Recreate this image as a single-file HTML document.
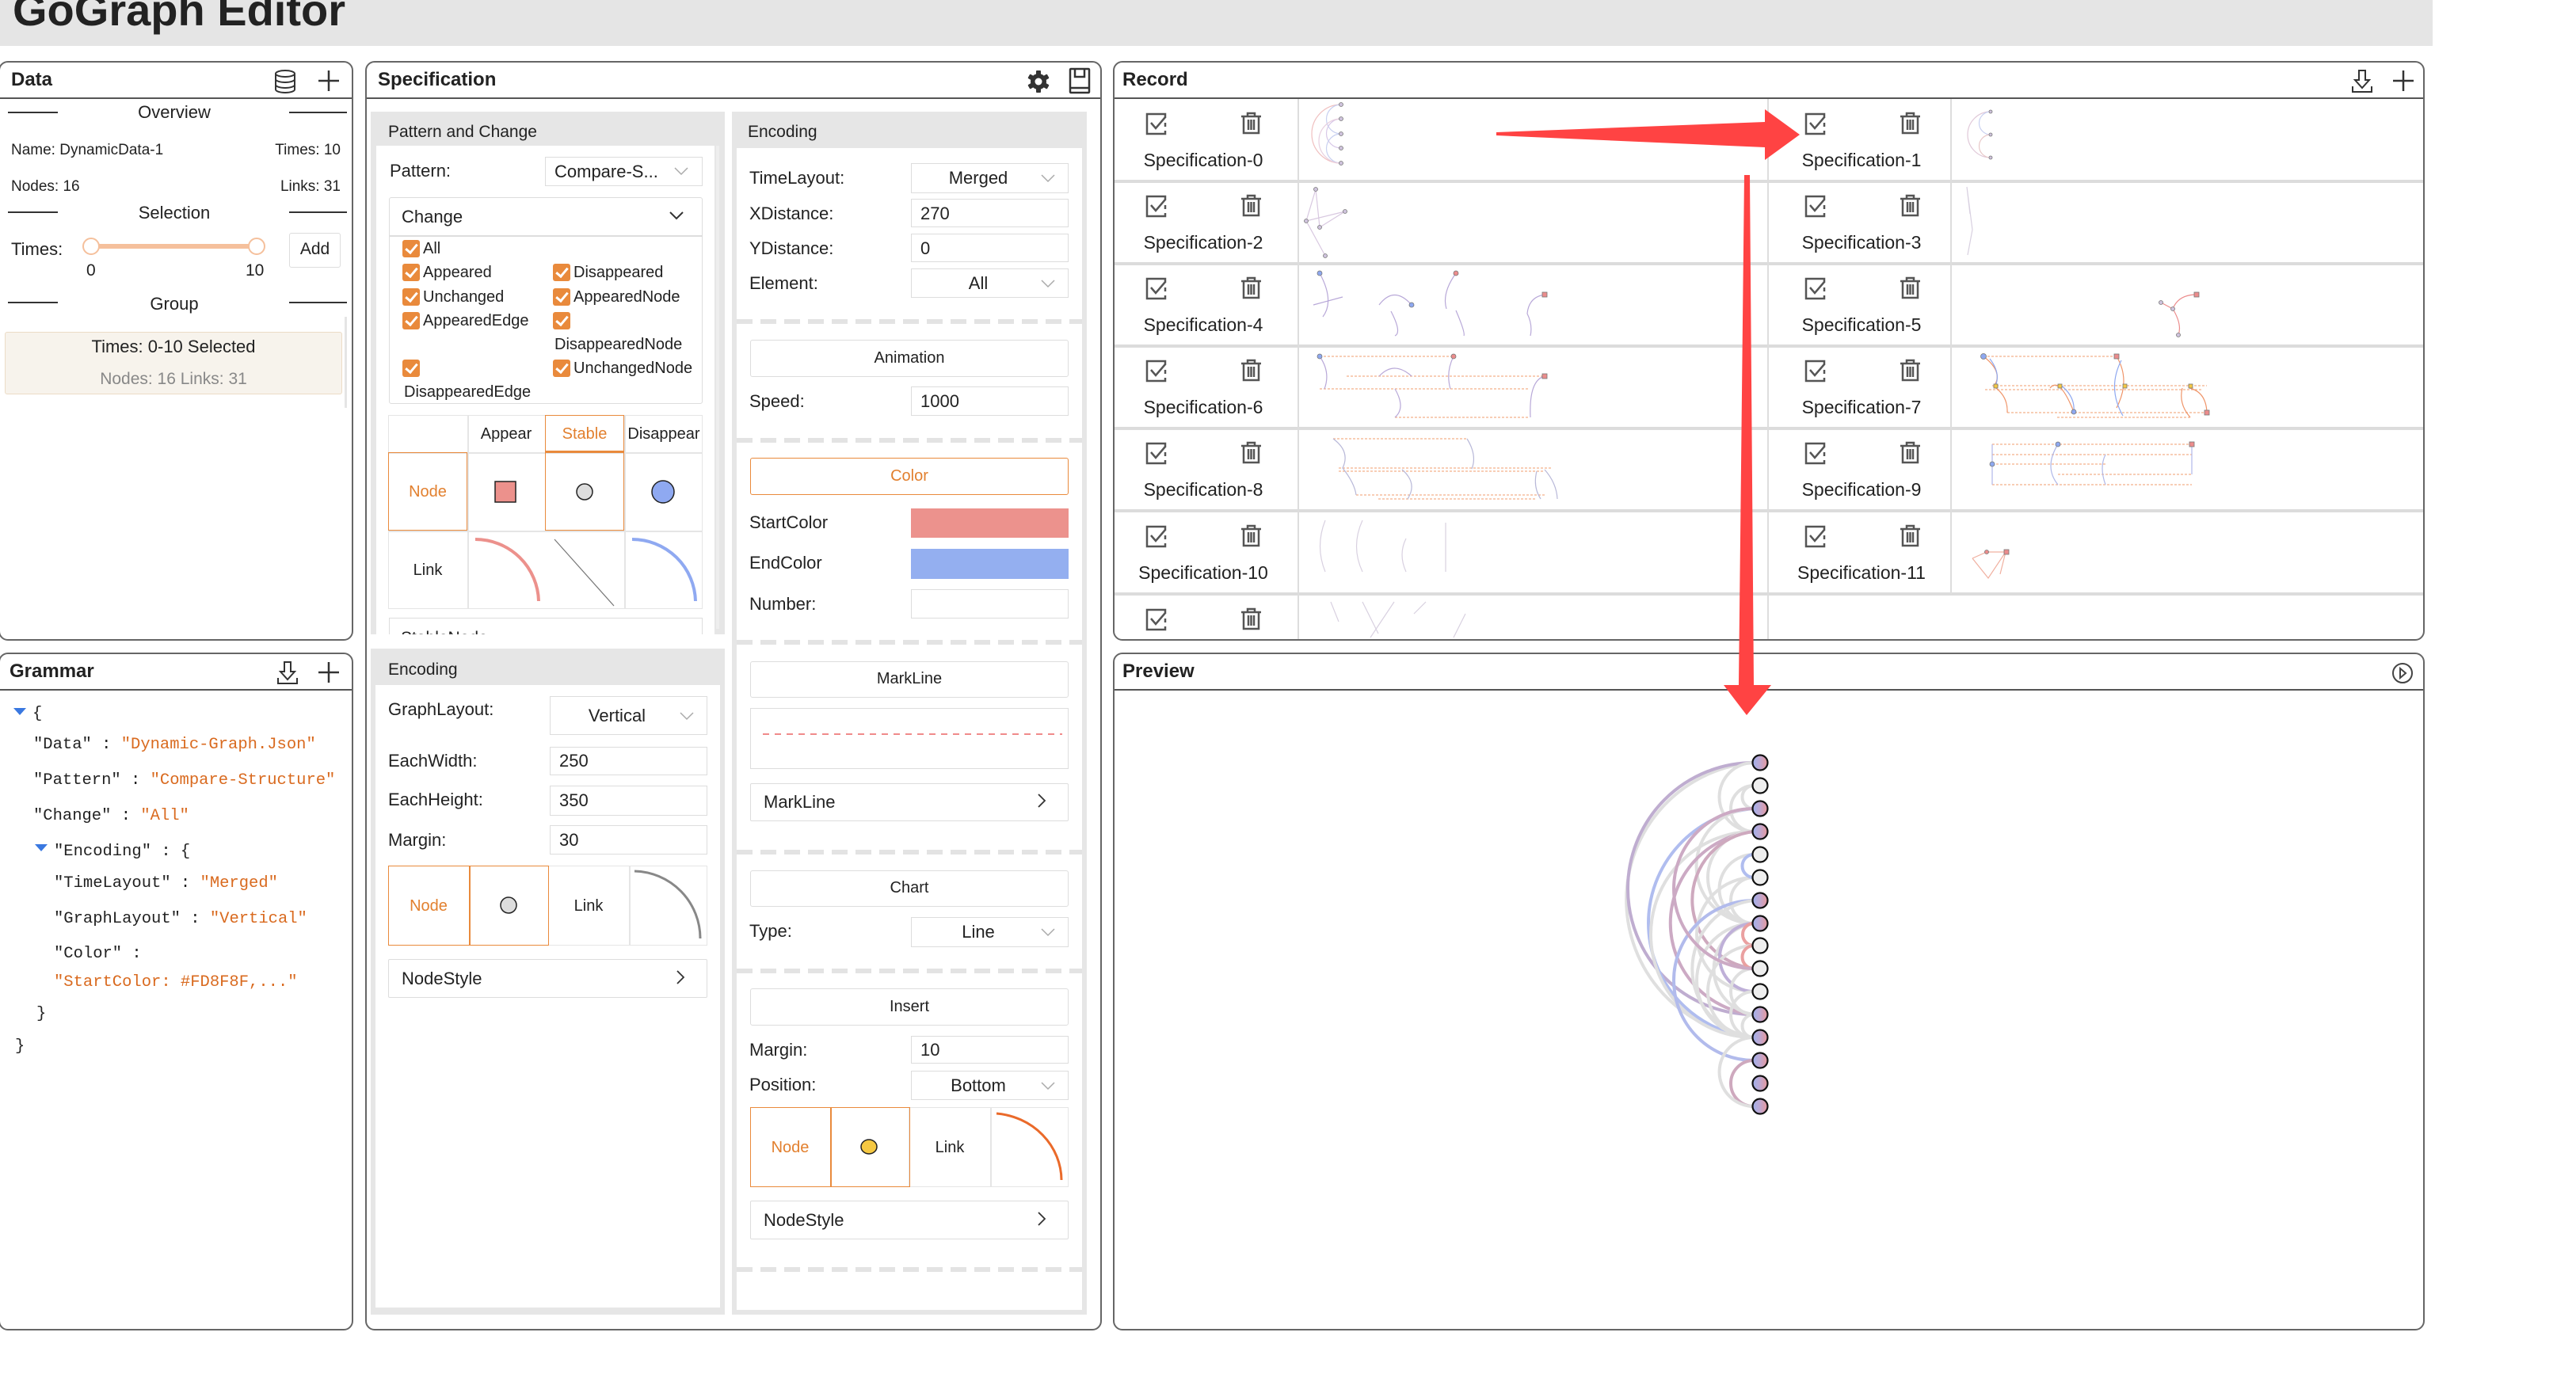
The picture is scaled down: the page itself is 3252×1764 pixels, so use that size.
<!DOCTYPE html>
<html><head><meta charset="utf-8"><style>
*{box-sizing:border-box}
body{margin:0;width:3252px;height:1764px;overflow:hidden;background:#fff;font-family:"Liberation Sans",Arial,sans-serif;color:#222;font-size:21px;position:relative}
.a{position:absolute}
.t{position:absolute;height:30px;line-height:30px;white-space:nowrap}
.c{text-align:center}
.panel{position:absolute;border:2px solid #666;border-radius:12px;background:#fff}
.ph{position:absolute;left:0;right:0;top:0;height:46px;border-bottom:2px solid #555}
.pt{position:absolute;left:14px;top:8px;font-weight:bold;font-size:24px}
.box{position:absolute;border:1.5px solid #ddd;background:#fff}
.gray{position:absolute;background:#e6e6e6}
.dash{position:absolute;height:6px;background:repeating-linear-gradient(90deg,#e3e3e3 0 20px,transparent 20px 30px)}
.cb{position:absolute;width:22px;height:22px;background:#e98a3c;border-radius:3px}
.cb:after{content:"";position:absolute;left:7px;top:2px;width:6px;height:12px;border:solid #fff;border-width:0 3px 3px 0;transform:rotate(40deg)}
.or{color:#e2802f}
.mono{font-family:"Liberation Mono",monospace;font-size:20.5px}
.s{color:#d96a1f}
.sep{position:absolute;left:0;right:0;height:4px;background:#dcdcdc}
.lab{position:absolute;font-size:23px;width:200px;text-align:center;height:30px;line-height:30px}
</style></head><body>

<div class="a" style="left:0;top:0;width:3071px;height:58px;background:#e5e5e5"></div>
<div class="a" style="left:16px;top:-20px;font-size:56px;font-weight:bold;color:#222;line-height:66px">GoGraph Editor</div>

<!-- DATA panel -->
<div class="panel" style="left:-2px;top:77px;width:448px;height:732px">
 <div class="ph"><div class="pt">Data</div>
  <svg class="a" style="left:345px;top:8px" width="30" height="32" viewBox="0 0 30 32" fill="none" stroke="#333" stroke-width="2"><ellipse cx="15" cy="6" rx="12" ry="4"/><path d="M3 6v20c0 2.2 5.4 4 12 4s12-1.8 12-4V6M3 13c0 2.2 5.4 4 12 4s12-1.8 12-4M3 20c0 2.2 5.4 4 12 4s12-1.8 12-4"/></svg>
  <svg class="a" style="left:400px;top:8px" width="30" height="30" stroke="#333" stroke-width="2.5"><path d="M15 2v26M2 15h26"/></svg>
 </div>
</div>
<div class="a" style="left:10px;top:141px;width:63px;height:2px;background:#333"></div>
<div class="a" style="left:365px;top:141px;width:73px;height:2px;background:#333"></div>
<div class="t c" style="left:120px;width:200px;top:127px;font-size:22px">Overview</div>
<div class="t" style="left:14px;top:175px;font-size:19px">Name: DynamicData-1</div>
<div class="t" style="left:330px;width:100px;text-align:right;top:175px;font-size:19px">Times: 10</div>
<div class="t" style="left:14px;top:221px;font-size:19px">Nodes: 16</div>
<div class="t" style="left:330px;width:100px;text-align:right;top:221px;font-size:19px">Links: 31</div>
<div class="a" style="left:10px;top:267px;width:63px;height:2px;background:#333"></div>
<div class="a" style="left:365px;top:267px;width:73px;height:2px;background:#333"></div>
<div class="t c" style="left:120px;width:200px;top:254px;font-size:22px">Selection</div>
<div class="t" style="left:14px;top:300px;font-size:22px">Times:</div>
<div class="a" style="left:116px;top:308px;width:208px;height:6px;background:#f5c09c;border-radius:3px"></div>
<div class="a" style="left:104px;top:300px;width:22px;height:22px;border:2.5px solid #f5c09c;border-radius:50%;background:#fff"></div>
<div class="a" style="left:313px;top:300px;width:22px;height:22px;border:2.5px solid #f5c09c;border-radius:50%;background:#fff"></div>
<div class="t" style="left:109px;top:327px;font-size:21px">0</div>
<div class="t" style="left:310px;top:327px;font-size:21px">10</div>
<div class="box" style="left:365px;top:294px;width:65px;height:44px;line-height:40px;text-align:center;font-size:21px;border-radius:3px">Add</div>
<div class="a" style="left:10px;top:381px;width:63px;height:2px;background:#333"></div>
<div class="a" style="left:365px;top:381px;width:73px;height:2px;background:#333"></div>
<div class="t c" style="left:120px;width:200px;top:369px;font-size:22px">Group</div>
<div class="a" style="left:435px;top:400px;width:3px;height:115px;background:#e5e5e5"></div>
<div class="a" style="left:6px;top:419px;width:426px;height:79px;background:#f7f3ec;border:1.5px solid #ecdcc6;border-radius:3px"></div>
<div class="t c" style="left:6px;width:426px;top:423px;font-size:22px">Times: 0-10 Selected</div>
<div class="t c" style="left:6px;width:426px;top:464px;font-size:21px;color:#888">Nodes: 16 Links: 31</div>

<!-- GRAMMAR panel -->
<div class="panel" style="left:-2px;top:824px;width:448px;height:856px">
 <div class="ph"><div class="pt" style="left:12px">Grammar</div>
  <svg class="a" style="left:348px;top:8px" width="30" height="32" fill="none" stroke="#333" stroke-width="2"><path d="M11 2h8v12h5l-9 10-9-10h5z"/><path d="M3 22v7h24v-7"/></svg>
  <svg class="a" style="left:400px;top:8px" width="30" height="30" stroke="#333" stroke-width="2.5"><path d="M15 2v26M2 15h26"/></svg>
 </div>
</div>
<svg class="a" style="left:17px;top:894px" width="16" height="10"><path d="M0 0h16L8 9z" fill="#3a78e0"/></svg>
<div class="t mono" style="left:41px;top:887px">{</div>
<div class="t mono" style="left:42px;top:926px">"Data" : <span class="s">"Dynamic-Graph.Json"</span></div>
<div class="t mono" style="left:42px;top:971px">"Pattern" : <span class="s">"Compare-Structure"</span></div>
<div class="t mono" style="left:42px;top:1016px">"Change" : <span class="s">"All"</span></div>
<svg class="a" style="left:44px;top:1066px" width="16" height="10"><path d="M0 0h16L8 9z" fill="#3a78e0"/></svg>
<div class="t mono" style="left:68px;top:1061px">"Encoding" : {</div>
<div class="t mono" style="left:68px;top:1101px">"TimeLayout" : <span class="s">"Merged"</span></div>
<div class="t mono" style="left:68px;top:1146px">"GraphLayout" : <span class="s">"Vertical"</span></div>
<div class="t mono" style="left:68px;top:1190px">"Color" :</div>
<div class="t mono" style="left:68px;top:1226px"><span class="s">"StartColor: #FD8F8F,..."</span></div>
<div class="t mono" style="left:46px;top:1266px">}</div>
<div class="t mono" style="left:19px;top:1307px">}</div>

<!-- SPECIFICATION panel -->
<div class="panel" style="left:461px;top:77px;width:930px;height:1603px">
 <div class="ph"><div class="pt">Specification</div>
  <svg class="a" style="left:833px;top:9px" width="30" height="30" viewBox="0 0 30 30"><g fill="#333"><circle cx="15" cy="15" r="10"/><rect x="12" y="1" width="6" height="28" rx="1"/><rect x="12" y="1" width="6" height="28" rx="1" transform="rotate(60 15 15)"/><rect x="12" y="1" width="6" height="28" rx="1" transform="rotate(120 15 15)"/></g><circle cx="15" cy="15" r="4.5" fill="#fff"/></svg>
  <svg class="a" style="left:886px;top:6px" width="28" height="34" fill="none" stroke="#333" stroke-width="2.5"><rect x="2" y="2" width="24" height="30" rx="1"/><path d="M8 2v10h12V2M2 26h24"/></svg>
 </div>
</div>
<div class="gray" style="left:468px;top:141px;width:447px;height:660px"></div>
<div class="t" style="left:490px;top:152px;font-size:21px">Pattern and Change</div>
<div class="a" style="left:475px;top:184px;width:427px;height:617px;background:#fff"></div>
<div class="a" style="left:904px;top:184px;width:4px;height:610px;background:#eee"></div>
<div class="t" style="left:492px;top:201px;font-size:22px">Pattern:</div>
<div class="box" style="left:688px;top:198px;width:199px;height:37px"></div>
<div class="t" style="left:700px;top:202px;font-size:22px">Compare-S...</div>
<svg class="a" style="left:851px;top:210px" width="18" height="12" fill="none" stroke="#aaa" stroke-width="1.5"><path d="M1 2l8 8 8-8"/></svg>
<div class="box" style="left:491px;top:249px;width:396px;height:261px;border-radius:3px"></div>
<div class="a" style="left:491px;top:297px;width:396px;height:1.5px;background:#ddd"></div>
<div class="t" style="left:507px;top:259px;font-size:22px">Change</div>
<svg class="a" style="left:845px;top:266px" width="18" height="12" fill="none" stroke="#333" stroke-width="2"><path d="M1 2l8 8 8-8"/></svg>
<div class="cb" style="left:508px;top:303px"></div><div class="t" style="left:534px;top:299px;font-size:20px">All</div>
<div class="cb" style="left:508px;top:333px"></div><div class="t" style="left:534px;top:329px;font-size:20px">Appeared</div>
<div class="cb" style="left:698px;top:333px"></div><div class="t" style="left:724px;top:329px;font-size:20px">Disappeared</div>
<div class="cb" style="left:508px;top:364px"></div><div class="t" style="left:534px;top:360px;font-size:20px">Unchanged</div>
<div class="cb" style="left:698px;top:364px"></div><div class="t" style="left:724px;top:360px;font-size:20px">AppearedNode</div>
<div class="cb" style="left:508px;top:394px"></div><div class="t" style="left:534px;top:390px;font-size:20px">AppearedEdge</div>
<div class="cb" style="left:698px;top:394px"></div>
<div class="t" style="left:700px;top:420px;font-size:20px">DisappearedNode</div>
<div class="cb" style="left:508px;top:454px"></div>
<div class="cb" style="left:698px;top:454px"></div><div class="t" style="left:724px;top:450px;font-size:20px">UnchangedNode</div>
<div class="t" style="left:510px;top:480px;font-size:20px">DisappearedEdge</div>
<div class="a" style="left:490px;top:524px;width:397px;height:245px;border:1.5px solid #e5e5e5"></div>
<div class="a" style="left:590px;top:524px;width:1.5px;height:245px;background:#e5e5e5"></div>
<div class="a" style="left:788px;top:524px;width:1.5px;height:245px;background:#e5e5e5"></div>
<div class="a" style="left:490px;top:571px;width:397px;height:1.5px;background:#e5e5e5"></div>
<div class="a" style="left:490px;top:670px;width:397px;height:1.5px;background:#e5e5e5"></div>
<div class="a" style="left:688px;top:524px;width:100px;height:47px;border:1.5px solid #e98a3c;border-bottom:2px solid #e98a3c"></div>
<div class="a" style="left:688px;top:571px;width:100px;height:99px;border:1.5px solid #e98a3c"></div>
<div class="a" style="left:490px;top:571px;width:100px;height:99px;border:1.5px solid #e98a3c"></div>
<div class="t c" style="left:590px;width:98px;top:533px;font-size:20px">Appear</div>
<div class="t c or" style="left:688px;width:100px;top:533px;font-size:20px">Stable</div>
<div class="t c" style="left:788px;width:100px;top:533px;font-size:20px">Disappear</div>
<div class="t c or" style="left:490px;width:100px;top:606px;font-size:20px">Node</div>
<div class="t c" style="left:490px;width:100px;top:705px;font-size:20px">Link</div>
<svg class="a" style="left:590px;top:571px" width="298" height="198">
 <rect x="35" y="37" width="26" height="26" fill="#ec918c" stroke="#222" stroke-width="1.5"/>
 <circle cx="148" cy="50" r="10" fill="#ddd" stroke="#222" stroke-width="1.5"/>
 <circle cx="247" cy="50" r="14" fill="#8fa9f1" stroke="#222" stroke-width="1.5"/>
 <path d="M10 110 A80 80 0 0 1 90 188" fill="none" stroke="#ec918c" stroke-width="4"/>
 <path d="M110 110 L185 194" stroke="#777" stroke-width="1.2"/>
 <path d="M208 110 A80 80 0 0 1 288 188" fill="none" stroke="#8fa9f1" stroke-width="4"/>
</svg>
<div class="box" style="left:491px;top:780px;width:396px;height:21px;border-bottom:none;overflow:hidden"><div class="t" style="left:14px;top:10px;font-size:21px">StableNode</div></div>
<div class="a" style="left:468px;top:801px;width:447px;height:18px;background:#fff"></div>

<div class="gray" style="left:468px;top:819px;width:447px;height:841px"></div>
<div class="t" style="left:490px;top:831px;font-size:21px">Encoding</div>
<div class="a" style="left:474px;top:865px;width:435px;height:786px;background:#fff"></div>
<div class="t" style="left:490px;top:881px;font-size:22px">GraphLayout:</div>
<div class="box" style="left:694px;top:879px;width:199px;height:49px"></div>
<div class="t c" style="left:694px;width:170px;top:889px;font-size:22px">Vertical</div>
<svg class="a" style="left:858px;top:898px" width="18" height="12" fill="none" stroke="#aaa" stroke-width="1.5"><path d="M1 2l8 8 8-8"/></svg>
<div class="t" style="left:490px;top:946px;font-size:22px">EachWidth:</div>
<div class="box" style="left:694px;top:943px;width:199px;height:36px"></div><div class="t" style="left:706px;top:946px;font-size:22px">250</div>
<div class="t" style="left:490px;top:995px;font-size:22px">EachHeight:</div>
<div class="box" style="left:694px;top:992px;width:199px;height:38px"></div><div class="t" style="left:706px;top:996px;font-size:22px">350</div>
<div class="t" style="left:490px;top:1046px;font-size:22px">Margin:</div>
<div class="box" style="left:694px;top:1042px;width:199px;height:37px"></div><div class="t" style="left:706px;top:1046px;font-size:22px">30</div>
<div class="a" style="left:692px;top:1093px;width:201px;height:101px;border:1.5px solid #e5e5e5"></div>
<div class="a" style="left:794px;top:1093px;width:1.5px;height:101px;background:#e5e5e5"></div>
<div class="a" style="left:490px;top:1093px;width:203px;height:101px;border:1.5px solid #e98a3c"></div>
<div class="a" style="left:592px;top:1093px;width:1.5px;height:101px;background:#e98a3c"></div>
<div class="t c or" style="left:490px;width:102px;top:1129px;font-size:20px">Node</div>
<div class="t c" style="left:692px;width:102px;top:1129px;font-size:20px">Link</div>
<svg class="a" style="left:592px;top:1093px" width="301" height="101"><circle cx="50" cy="50" r="10" fill="#ddd" stroke="#222" stroke-width="1.5"/><path d="M209 7 A85 85 0 0 1 292 92" fill="none" stroke="#888" stroke-width="3"/></svg>
<div class="box" style="left:490px;top:1211px;width:403px;height:49px;border-radius:2px"></div>
<div class="t" style="left:507px;top:1221px;font-size:22px">NodeStyle</div>
<svg class="a" style="left:853px;top:1225px" width="12" height="18" fill="none" stroke="#333" stroke-width="1.8"><path d="M2 1l8 8-8 8"/></svg>

<div class="gray" style="left:924px;top:141px;width:448px;height:1519px"></div>
<div class="t" style="left:944px;top:152px;font-size:21px">Encoding</div>
<div class="a" style="left:930px;top:187px;width:436px;height:1467px;background:#fff"></div>
<div class="t" style="left:946px;top:210px;font-size:22px">TimeLayout:</div>
<div class="box" style="left:1150px;top:206px;width:199px;height:38px"></div>
<div class="t c" style="left:1150px;width:170px;top:210px;font-size:22px">Merged</div>
<svg class="a" style="left:1314px;top:219px" width="18" height="12" fill="none" stroke="#aaa" stroke-width="1.5"><path d="M1 2l8 8 8-8"/></svg>
<div class="t" style="left:946px;top:255px;font-size:22px">XDistance:</div>
<div class="box" style="left:1150px;top:251px;width:199px;height:36px"></div><div class="t" style="left:1162px;top:255px;font-size:22px">270</div>
<div class="t" style="left:946px;top:299px;font-size:22px">YDistance:</div>
<div class="box" style="left:1150px;top:295px;width:199px;height:36px"></div><div class="t" style="left:1162px;top:299px;font-size:22px">0</div>
<div class="t" style="left:946px;top:343px;font-size:22px">Element:</div>
<div class="box" style="left:1150px;top:339px;width:199px;height:37px"></div>
<div class="t c" style="left:1150px;width:170px;top:343px;font-size:22px">All</div>
<svg class="a" style="left:1314px;top:352px" width="18" height="12" fill="none" stroke="#aaa" stroke-width="1.5"><path d="M1 2l8 8 8-8"/></svg>
<div class="dash" style="left:930px;top:403px;width:436px"></div>
<div class="box" style="left:947px;top:429px;width:402px;height:47px;border-radius:3px;text-align:center;line-height:44px;font-size:20px">Animation</div>
<div class="t" style="left:946px;top:492px;font-size:22px">Speed:</div>
<div class="box" style="left:1150px;top:488px;width:199px;height:37px"></div><div class="t" style="left:1162px;top:492px;font-size:22px">1000</div>
<div class="dash" style="left:930px;top:553px;width:436px"></div>
<div class="box" style="left:947px;top:578px;width:402px;height:47px;border:1.5px solid #e98a3c;border-radius:3px;text-align:center;line-height:44px;font-size:20px;color:#e2802f">Color</div>
<div class="t" style="left:946px;top:645px;font-size:22px">StartColor</div>
<div class="a" style="left:1150px;top:642px;width:199px;height:37px;background:#ec928d"></div>
<div class="t" style="left:946px;top:696px;font-size:22px">EndColor</div>
<div class="a" style="left:1150px;top:693px;width:199px;height:38px;background:#94aff0"></div>
<div class="t" style="left:946px;top:748px;font-size:22px">Number:</div>
<div class="box" style="left:1150px;top:744px;width:199px;height:37px"></div>
<div class="dash" style="left:930px;top:808px;width:436px"></div>
<div class="box" style="left:947px;top:835px;width:402px;height:46px;border-radius:3px;text-align:center;line-height:43px;font-size:20px">MarkLine</div>
<div class="box" style="left:947px;top:894px;width:402px;height:77px"></div>
<div class="a" style="left:963px;top:926px;width:378px;height:2px;background:repeating-linear-gradient(90deg,#f08a8a 0 8px,transparent 8px 15px)"></div>
<div class="box" style="left:947px;top:989px;width:402px;height:48px;border-radius:2px"></div>
<div class="t" style="left:964px;top:998px;font-size:22px">MarkLine</div>
<svg class="a" style="left:1309px;top:1002px" width="12" height="18" fill="none" stroke="#333" stroke-width="1.8"><path d="M2 1l8 8-8 8"/></svg>
<div class="dash" style="left:930px;top:1073px;width:436px"></div>
<div class="box" style="left:947px;top:1099px;width:402px;height:46px;border-radius:3px;text-align:center;line-height:43px;font-size:20px">Chart</div>
<div class="t" style="left:946px;top:1161px;font-size:22px">Type:</div>
<div class="box" style="left:1150px;top:1158px;width:199px;height:38px"></div>
<div class="t c" style="left:1150px;width:170px;top:1162px;font-size:22px">Line</div>
<svg class="a" style="left:1314px;top:1171px" width="18" height="12" fill="none" stroke="#aaa" stroke-width="1.5"><path d="M1 2l8 8 8-8"/></svg>
<div class="dash" style="left:930px;top:1223px;width:436px"></div>
<div class="box" style="left:947px;top:1248px;width:402px;height:47px;border-radius:3px;text-align:center;line-height:44px;font-size:20px">Insert</div>
<div class="t" style="left:946px;top:1311px;font-size:22px">Margin:</div>
<div class="box" style="left:1150px;top:1308px;width:199px;height:35px"></div><div class="t" style="left:1162px;top:1311px;font-size:22px">10</div>
<div class="t" style="left:946px;top:1355px;font-size:22px">Position:</div>
<div class="box" style="left:1150px;top:1352px;width:199px;height:37px"></div>
<div class="t c" style="left:1150px;width:170px;top:1356px;font-size:22px">Bottom</div>
<svg class="a" style="left:1314px;top:1365px" width="18" height="12" fill="none" stroke="#aaa" stroke-width="1.5"><path d="M1 2l8 8 8-8"/></svg>
<div class="a" style="left:1147px;top:1398px;width:202px;height:101px;border:1.5px solid #e5e5e5"></div>
<div class="a" style="left:1250px;top:1398px;width:1.5px;height:101px;background:#e5e5e5"></div>
<div class="a" style="left:947px;top:1398px;width:202px;height:101px;border:1.5px solid #e98a3c"></div>
<div class="a" style="left:1048px;top:1398px;width:1.5px;height:101px;background:#e98a3c"></div>
<div class="t c or" style="left:947px;width:101px;top:1434px;font-size:20px">Node</div>
<div class="t c" style="left:1148px;width:102px;top:1434px;font-size:20px">Link</div>
<svg class="a" style="left:1048px;top:1398px" width="301" height="101"><ellipse cx="49" cy="50" rx="10" ry="9" fill="#f5c842" stroke="#222" stroke-width="1.5"/><path d="M210 8 A90 85 0 0 1 292 92" fill="none" stroke="#ea6a2a" stroke-width="3"/></svg>
<div class="box" style="left:947px;top:1516px;width:402px;height:49px;border-radius:2px"></div>
<div class="t" style="left:964px;top:1526px;font-size:22px">NodeStyle</div>
<svg class="a" style="left:1309px;top:1530px" width="12" height="18" fill="none" stroke="#333" stroke-width="1.8"><path d="M2 1l8 8-8 8"/></svg>
<div class="dash" style="left:930px;top:1600px;width:436px"></div>

<!-- RECORD panel -->
<div class="panel" style="left:1405px;top:77px;width:1656px;height:732px;overflow:hidden">
 <div class="ph"><div class="pt" style="left:10px">Record</div>
  <svg class="a" style="left:1560px;top:8px" width="30" height="32" fill="none" stroke="#333" stroke-width="2"><path d="M11 2h8v12h5l-9 10-9-10h5z"/><path d="M3 22v7h24v-7"/></svg>
  <svg class="a" style="left:1612px;top:8px" width="30" height="30" stroke="#333" stroke-width="2.5"><path d="M15 2v26M2 15h26"/></svg>
 </div>
 <div class="sep" style="top:148px"></div><div class="sep" style="top:252px"></div><div class="sep" style="top:356px"></div><div class="sep" style="top:460px"></div><div class="sep" style="top:564px"></div><div class="sep" style="top:669px"></div>
 <div class="a" style="left:824px;top:46px;width:1.5px;height:690px;background:#ddd"></div>
 <div class="a" style="left:231px;top:46px;width:1.5px;height:690px;background:#ddd"></div>
 <div class="a" style="left:1055px;top:46px;width:1.5px;height:625px;background:#ddd"></div>
</div>
<svg class="a" style="left:0;top:0" width="3252" height="1764">
<defs>
 <g id="ck" fill="none" stroke="#555" stroke-width="2.5"><path d="M24 6V1H1v25h23v-4M24 12v5"/><path d="M6 12l6 7 12-14"/></g>
 <g id="tr" fill="none" stroke="#555" stroke-width="2.5"><path d="M1 5h25M9 5V1h9v4M4 5v21h19V5M10 9v13M13.5 9v13M17 9v13"/></g>
</defs>
<g>
 <use href="#ck" x="1447" y="143"/><use href="#tr" x="1566" y="142"/>
 <use href="#ck" x="2279" y="143"/><use href="#tr" x="2398" y="142"/>
 <use href="#ck" x="1447" y="247"/><use href="#tr" x="1566" y="246"/>
 <use href="#ck" x="2279" y="247"/><use href="#tr" x="2398" y="246"/>
 <use href="#ck" x="1447" y="351"/><use href="#tr" x="1566" y="350"/>
 <use href="#ck" x="2279" y="351"/><use href="#tr" x="2398" y="350"/>
 <use href="#ck" x="1447" y="455"/><use href="#tr" x="1566" y="454"/>
 <use href="#ck" x="2279" y="455"/><use href="#tr" x="2398" y="454"/>
 <use href="#ck" x="1447" y="559"/><use href="#tr" x="1566" y="558"/>
 <use href="#ck" x="2279" y="559"/><use href="#tr" x="2398" y="558"/>
 <use href="#ck" x="1447" y="664"/><use href="#tr" x="1566" y="663"/>
 <use href="#ck" x="2279" y="664"/><use href="#tr" x="2398" y="663"/>
 <use href="#ck" x="1447" y="769"/><use href="#tr" x="1566" y="768"/>
</g>
<g fill="none" stroke-width="1.2">
 <path d="M1693 132 A37 37 0 0 0 1693 206" stroke="#f0c0c0"/><path d="M1693 132 A18 18 0 0 0 1693 169" stroke="#c8d0f0"/><path d="M1693 150 A18 18 0 0 0 1693 187" stroke="#d8c8e8"/><path d="M1693 169 A18 18 0 0 0 1693 206" stroke="#c8d0f0"/><path d="M1693 150 A28 28 0 0 0 1693 206" stroke="#e8d0e0"/>
 <path d="M2513 141 A29 29 0 0 0 2513 199" stroke="#e0c8d8"/><path d="M2513 141 A14 14 0 0 0 2513 170" stroke="#c8d0f0"/><path d="M2513 170 A14 14 0 0 0 2513 199" stroke="#e8c8c8"/>
 <path d="M1661 239L1649 279L1673 323M1661 239L1666 287M1649 279L1698 267L1666 287" stroke="#d8c8e0"/>
 <path d="M2483 236L2490 290L2484 322M2483 236L2487 270" stroke="#d8d0e0"/>
 <path d="M1666 345Q1685 380 1670 400M1658 385L1695 375M1741 385Q1760 360 1782 385M1756 393Q1770 420 1761 424M1838 345Q1820 370 1826 390M1838 392Q1850 420 1848 424M1950 372Q1930 375 1928 396Q1935 410 1932 424" stroke="#b8a8d8"/>
 <path d="M2773 372Q2750 372 2743 390Q2755 410 2750 423M2728 382L2743 390" stroke="#ec8c8c"/>
 <g stroke="#f3b08a" stroke-dasharray="3 2"><path d="M1666 450H1835M1700 475H1950M1666 491H1930M1761 527H1930"/></g>
 <path d="M1666 450Q1680 470 1672 491M1741 475Q1760 455 1782 475M1835 450Q1825 470 1831 491M1761 491Q1775 515 1761 527M1950 475Q1930 480 1932 527" stroke="#b8a8d8"/>
 <g stroke="#f3b08a" stroke-dasharray="3 2"><path d="M2504 450H2672M2515 487H2786M2506 492H2780M2534 521H2786M2597 527H2765"/></g>
 <path d="M2504 450Q2530 470 2517 488Q2535 500 2534 521M2588 490Q2600 475 2618 520M2672 450Q2690 480 2672 515M2764 490Q2785 495 2786 521M2755 490Q2750 510 2765 527" stroke="#ef9468"/>
 <path d="M2512 453Q2525 470 2520 485M2600 485Q2620 500 2618 520M2678 455Q2660 490 2680 525" stroke="#8ea8f0"/>
 <g stroke="#f3b08a" stroke-dasharray="3 2"><path d="M1683 554H1852M1690 591H1960M1690 595H1950M1712 625H1950M1740 630H1940"/></g>
 <path d="M1683 554Q1705 570 1695 591Q1710 610 1712 625M1770 593Q1790 610 1777 630M1852 554Q1865 575 1858 592M1950 593Q1965 610 1966 630M1940 595Q1935 615 1945 630" stroke="#b8b8d8"/>
 <g stroke="#f3b08a" stroke-dasharray="3 2"><path d="M2515 561H2767M2515 574H2767M2515 586H2658M2598 599H2767M2515 612H2767"/></g>
 <path d="M2598 561Q2580 590 2598 612M2515 561V612M2658 574Q2650 590 2658 612M2767 561V599" stroke="#b0b8e8"/>
 <path d="M1673 657Q1660 690 1673 722M1720 657Q1705 690 1720 722M1775 680Q1765 700 1775 722M1825 660V722" stroke="#d8d0e0"/>
 <path d="M2490 705L2508 697L2532 697L2510 730L2490 705M2532 697L2525 725" stroke="#f0b0a0"/>
 <path d="M1680 760L1690 785M1720 760L1740 800M1760 760L1730 805M1800 760L1785 775M1850 775L1835 805" stroke="#d8d0e0"/>
</g>
<g fill="#cfc3dd" stroke="#777" stroke-width="0.8">
 <circle cx="1693" cy="132" r="2.5"/><circle cx="1693" cy="150" r="2.5"/><circle cx="1693" cy="169" r="2.5"/><circle cx="1693" cy="187" r="2.5"/><circle cx="1693" cy="206" r="2.5"/>
 <circle cx="2513" cy="141" r="2"/><circle cx="2513" cy="170" r="2"/><circle cx="2513" cy="199" r="2"/>
 <circle cx="1661" cy="239" r="2.5"/><circle cx="1649" cy="279" r="2.5"/><circle cx="1698" cy="267" r="2.5"/><circle cx="1666" cy="287" r="2.5"/><circle cx="1673" cy="323" r="2.5"/>
 <circle cx="1666" cy="345" r="3" fill="#8ea8f0"/><circle cx="1782" cy="385" r="3" fill="#8ea8f0"/><circle cx="1838" cy="345" r="3" fill="#ec8c8c"/><rect x="1947" y="369" width="6" height="6" fill="#ec8c8c"/>
 <rect x="2770" y="369" width="6" height="6" fill="#ec8c8c"/><circle cx="2743" cy="390" r="2.5"/><circle cx="2728" cy="382" r="2.5"/><circle cx="2750" cy="423" r="2.5"/>
 <circle cx="1666" cy="450" r="3" fill="#8ea8f0"/><circle cx="1835" cy="450" r="3" fill="#ec8c8c"/><rect x="1947" y="472" width="6" height="6" fill="#ec8c8c"/>
 <circle cx="2504" cy="450" r="3.5" fill="#8ea8f0"/><rect x="2669" y="447" width="6" height="6" fill="#ec8c8c"/><circle cx="2618" cy="520" r="3" fill="#8ea8f0"/><rect x="2783" y="518" width="6" height="6" fill="#ec8c8c"/><rect x="2517" y="485" width="5" height="5" fill="#f5c842"/><rect x="2598" y="485" width="5" height="5" fill="#f5c842"/><rect x="2680" y="485" width="5" height="5" fill="#f5c842"/><rect x="2763" y="485" width="5" height="5" fill="#f5c842"/>
 <circle cx="2598" cy="561" r="3" fill="#8ea8f0"/><rect x="2764" y="558" width="6" height="6" fill="#ec8c8c"/><circle cx="2515" cy="586" r="3" fill="#8ea8f0"/>
 <circle cx="2508" cy="697" r="2.5" fill="#ec8c8c"/><rect x="2530" y="694" width="6" height="6" fill="#ec8c8c"/>
</g>
</svg>
<div class="lab" style="left:1419px;top:187px">Specification-0</div>
<div class="lab" style="left:2250px;top:187px">Specification-1</div>
<div class="lab" style="left:1419px;top:291px">Specification-2</div>
<div class="lab" style="left:2250px;top:291px">Specification-3</div>
<div class="lab" style="left:1419px;top:395px">Specification-4</div>
<div class="lab" style="left:2250px;top:395px">Specification-5</div>
<div class="lab" style="left:1419px;top:499px">Specification-6</div>
<div class="lab" style="left:2250px;top:499px">Specification-7</div>
<div class="lab" style="left:1419px;top:603px">Specification-8</div>
<div class="lab" style="left:2250px;top:603px">Specification-9</div>
<div class="lab" style="left:1419px;top:708px">Specification-10</div>
<div class="lab" style="left:2250px;top:708px">Specification-11</div>

<!-- PREVIEW panel -->
<div class="panel" style="left:1405px;top:824px;width:1656px;height:856px">
 <div class="ph"><div class="pt" style="left:10px">Preview</div>
  <svg class="a" style="left:1612px;top:10px" width="28" height="28" fill="none" stroke="#444" stroke-width="2"><circle cx="14" cy="14" r="12"/><path d="M11 8l7 6-7 6z"/></svg>
 </div>
</div>
<svg class="a" style="left:0;top:0" width="3252" height="1764">
<defs><linearGradient id="nd" x1="0" x2="1" y1="0" y2="0"><stop offset="0" stop-color="#9fb0ee"/><stop offset=".5" stop-color="#c0a8d0"/><stop offset="1" stop-color="#e8969a"/></linearGradient></defs>
<g fill="none" stroke-width="4" opacity=".9">
 <path d="M2214 963A174 174 0 0 0 2214 1310" stroke="#dcdcdc"/>
 <path d="M2214 963A159 159 0 0 0 2214 1281" stroke="#b9a5cc"/>
 <path d="M2214 963A43 43 0 0 0 2214 1050" stroke="#dcdcdc"/>
 <path d="M2214 992A29 29 0 0 0 2214 1050" stroke="#dcdcdc"/>
 <path d="M2214 1021A145 145 0 0 0 2214 1310" stroke="#a8b6ee"/>
 <path d="M2214 1021A72 72 0 0 0 2214 1166" stroke="#dcdcdc"/>
 <path d="M2214 1050A130 130 0 0 0 2214 1310" stroke="#dcdcdc"/>
 <path d="M2214 1050A116 116 0 0 0 2214 1281" stroke="#c7a1be"/>
 <path d="M2214 1050A58 58 0 0 0 2214 1166" stroke="#dcdcdc"/>
 <path d="M2214 1050A87 87 0 0 0 2214 1223" stroke="#c9a0b8"/>
 <path d="M2214 1079A43 43 0 0 0 2214 1166" stroke="#dcdcdc"/>
 <path d="M2214 1108A72 72 0 0 0 2214 1252" stroke="#dcdcdc"/>
 <path d="M2214 1108A29 29 0 0 0 2214 1166" stroke="#dcdcdc"/>
 <path d="M2214 1137A101 101 0 0 0 2214 1339" stroke="#aab4ea"/>
 <path d="M2214 1137A87 87 0 0 0 2214 1310" stroke="#dcdcdc"/>
 <path d="M2214 1166A58 58 0 0 0 2214 1281" stroke="#dcdcdc"/>
 <path d="M2214 1166A72 72 0 0 0 2214 1310" stroke="#dcdcdc"/>
 <path d="M2214 1166A43 43 0 0 0 2214 1252" stroke="#b9a8d4"/>
 <path d="M2214 1166A14 14 0 0 0 2214 1194" stroke="#e89696"/>
 <path d="M2214 1194A58 58 0 0 0 2214 1310" stroke="#dcdcdc"/>
 <path d="M2214 1223A29 29 0 0 0 2214 1281" stroke="#dcdcdc"/>
 <path d="M2214 1252A29 29 0 0 0 2214 1310" stroke="#dcdcdc"/>
 <path d="M2214 1079A14 14 0 0 0 2214 1108" stroke="#a8b6ee"/>
 <path d="M2214 1339A29 29 0 0 0 2214 1397" stroke="#c9a0b8"/>
 <path d="M2214 1310A43 43 0 0 0 2214 1397" stroke="#dcdcdc"/>
 <path d="M2214 1281A14 14 0 0 0 2214 1310" stroke="#dcdcdc"/>
 <path d="M2214 1194A14 14 0 0 0 2214 1223" stroke="#e89696"/>
 <path d="M2214 992A14 14 0 0 0 2214 1021" stroke="#dcdcdc"/>
 <path d="M2214 1021A101 101 0 0 0 2214 1223" stroke="#c7a1be"/>
</g>
<g stroke="#111" stroke-width="2.2">
 <circle cx="2222" cy="963" r="9.5" fill="url(#nd)"/><circle cx="2222" cy="992" r="9.5" fill="#eee"/><circle cx="2222" cy="1021" r="9.5" fill="url(#nd)"/><circle cx="2222" cy="1050" r="9.5" fill="url(#nd)"/>
 <circle cx="2222" cy="1079" r="9.5" fill="#eee"/><circle cx="2222" cy="1108" r="9.5" fill="#eee"/><circle cx="2222" cy="1137" r="9.5" fill="url(#nd)"/><circle cx="2222" cy="1166" r="9.5" fill="url(#nd)"/>
 <circle cx="2222" cy="1194" r="9.5" fill="#eee"/><circle cx="2222" cy="1223" r="9.5" fill="#eee"/><circle cx="2222" cy="1252" r="9.5" fill="#eee"/><circle cx="2222" cy="1281" r="9.5" fill="url(#nd)"/>
 <circle cx="2222" cy="1310" r="9.5" fill="url(#nd)"/><circle cx="2222" cy="1339" r="9.5" fill="url(#nd)"/><circle cx="2222" cy="1368" r="9.5" fill="url(#nd)"/><circle cx="2222" cy="1397" r="9.5" fill="url(#nd)"/>
</g>
<polygon points="1889,167 2228,154 2228,138 2272,170 2228,202 2228,186 1889,171" fill="#ff4343"/>
<polygon points="2202,221 2209,221 2214,865 2236,865 2205,903 2176,865 2195,865" fill="#ff4343"/>
</svg>
</body></html>
